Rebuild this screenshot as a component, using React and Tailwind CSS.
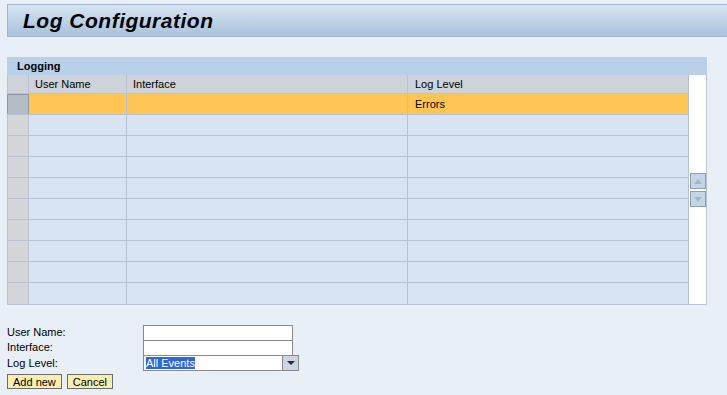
import React from 'react';

const rows = [
  { user: '', iface: '', level: 'Errors', selected: true },
  ...Array.from({ length: 9 }, () => ({ user: '', iface: '', level: '', selected: false })),
];

const App = () => {
  return (
    <div className="w-[727px] h-[395px] bg-[#e8eff7] font-['Liberation_Sans',Arial,sans-serif] text-black overflow-hidden">
      <div className="pt-[4px] pl-[7px]">
        <div className="h-[33px] border-y border-l border-[#9fb4cc] bg-gradient-to-b from-[#d6e4f1] to-[#a9c2dc] flex items-center pl-[15px]">
          <h1 className="text-[21px] font-bold italic tracking-[0.5px]">Log Configuration</h1>
        </div>
      </div>

      <div className="ml-[7px] mt-[20px] w-[700px]">
        <div className="h-[18px] bg-[#b8d0e8] text-[11px] font-bold pl-[10px] flex items-center">Logging</div>
        <div className="flex border-b border-r border-[#b9c2d2]">
          <div className="w-[681px]">
            <div className="flex h-[19px] bg-[#cdd3d8] text-[11px] border-b border-[#b9c2d2]">
              <div className="w-[22px] border-x border-[#b9c2d2]" />
              <div className="w-[98px] border-r border-[#b9c2d2] pl-[6px] flex items-center">User Name</div>
              <div className="w-[281px] border-r border-[#b9c2d2] pl-[6px] flex items-center">Interface</div>
              <div className="w-[280px] pl-[7px] flex items-center">Log Level</div>
            </div>
            {rows.map((r, i) => (
              <div
                key={i}
                className={`flex h-[21px] text-[11px] border-b border-[#b9c2d2] last:border-b-0 ${r.selected ? 'bg-[#ffc655]' : 'bg-[#d8e4f1]'}`}
              >
                <div className={`w-[22px] border-l border-r ${r.selected ? 'bg-[#b4bcc6] border-[#8d96a3] border-t' : 'bg-[#d4d6d9] border-[#b9c2d2]'}`} />
                <div className="w-[98px] border-r border-[#b9c2d2] pl-[6px] flex items-center">{r.user}</div>
                <div className="w-[281px] border-r border-[#b9c2d2] pl-[6px] flex items-center">{r.iface}</div>
                <div className="w-[280px] pl-[7px] flex items-center">{r.level}</div>
              </div>
            ))}
          </div>
          <div className="flex-1 bg-white border-l border-[#b9c2d2] flex flex-col items-center pt-[98px] gap-[2px]">
            <div className="w-[16px] h-[16px] bg-[#c3d6e8] border border-[#8c9fb3] flex items-center justify-center">
              <svg width="8" height="5" viewBox="0 0 8 5"><path d="M0 5 L4 0 L8 5 Z" fill="#a9b4bf" /></svg>
            </div>
            <div className="w-[16px] h-[16px] bg-[#c3d6e8] border border-[#8c9fb3] flex items-center justify-center">
              <svg width="8" height="5" viewBox="0 0 8 5"><path d="M0 0 L4 5 L8 0 Z" fill="#a9b4bf" /></svg>
            </div>
          </div>
        </div>
      </div>

      <div className="ml-[7px] mt-[20px] text-[11px]">
        <div className="flex items-center h-[15px]">
          <div className="w-[136px]">User Name:</div>
          <div className="w-[150px] h-[16px] bg-white border border-[#8a8a8a]" />
        </div>
        <div className="flex items-center h-[15px]">
          <div className="w-[136px]">Interface:</div>
          <div className="w-[150px] h-[16px] bg-white border border-[#8a8a8a]" />
        </div>
        <div className="flex items-center h-[16px]">
          <div className="w-[136px]">Log Level:</div>
          <div className="w-[156px] h-[16px] bg-white border border-[#8a8a8a] flex">
            <div className="flex-1 pl-[2px] flex items-center">
              <span className="bg-[#3166d6] text-white leading-[12px]">All Events</span>
            </div>
            <div className="w-[16px] bg-[#cdd6e0] border-l border-[#8a8a8a] flex items-center justify-center">
              <svg width="8" height="4" viewBox="0 0 8 4"><path d="M0 0 L4 4 L8 0 Z" fill="#1f2a3a" /></svg>
            </div>
          </div>
        </div>
        <div className="flex gap-[5px] mt-[3px]">
          <button className="h-[15px] px-[5px] bg-[#fbeeb0] border border-[#6b6b6b] text-[11px] leading-[12px]">Add new</button>
          <button className="h-[15px] px-[5px] bg-[#fbeeb0] border border-[#6b6b6b] text-[11px] leading-[12px]">Cancel</button>
        </div>
      </div>
    </div>
  );
};

export default App;
